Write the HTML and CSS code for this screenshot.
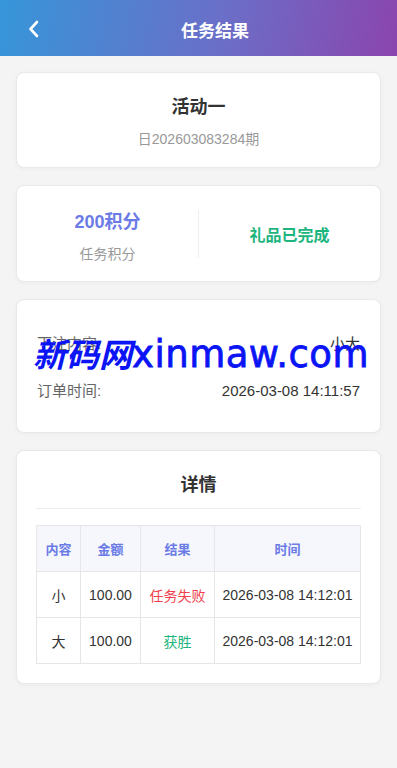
FILE: index.html
```html
<!DOCTYPE html>
<html lang="zh-CN">
<head>
  <meta charset="UTF-8" />
  <meta name="viewport" content="width=device-width, initial-scale=1" />
  <title>任务结果</title>
  <link rel="stylesheet" href="styles.css">
</head>
<body>

<!-- Header -->
<div class="header">
  <a href="#" class="back-btn">
    <svg width="14" height="18" viewBox="0 0 14 18"><path d="M10 2 L3.5 9 L10 16" fill="none" stroke="#fff" stroke-width="2.6" stroke-linecap="round" stroke-linejoin="round"/></svg>
  </a>
  <h1 class="header-title">任务结果</h1>
</div>

<div class="page">
  <!-- 活动信息 -->
  <div class="card card-activity">
    <h2 class="activity-name">活动一</h2>
    <p class="activity-period">日202603083284期</p>
  </div>

  <!-- 积分 -->
  <div class="card card-score">
    <div class="score-col">
      <div class="score-value">200积分</div>
      <div class="score-label">任务积分</div>
    </div>
    <div class="score-col">
      <div class="score-status">礼品已完成</div>
    </div>
  </div>

  <!-- 订单信息 -->
  <div class="card card-order">
    <div class="order-row"><span class="order-label">下注内容:</span><span class="order-value">小大</span></div>
    <div class="order-row"><span class="order-label">订单时间:</span><span class="order-value">2026-03-08 14:11:57</span></div>
    <div class="watermark"><span class="wm-cn">新码网</span><span class="wm-en">xinmaw.com</span></div>
  </div>

  <!-- 详情 -->
  <div class="card card-detail">
    <h2 class="detail-title">详情</h2>
    <table class="detail-table">
      <thead>
        <tr><th class="col-content">内容</th><th class="col-amount">金额</th><th class="col-result">结果</th><th>时间</th></tr>
      </thead>
      <tbody>
        <tr><td>小</td><td>100.00</td><td class="lose">任务失败</td><td>2026-03-08 14:12:01</td></tr>
        <tr><td>大</td><td>100.00</td><td class="win">获胜</td><td>2026-03-08 14:12:01</td></tr>
      </tbody>
    </table>
  </div>
</div>

</body>
</html>
```

FILE: styles.css
```css
* {
  margin: 0; padding: 0; box-sizing: border-box;
}
body {
  font-family: 'Liberation Sans', 'Noto Sans CJK SC', sans-serif;
  background: #f4f4f4;
  color: #333;
}
.header {
  height: 56px;
  background: linear-gradient(100deg, #3696d9 0%, #6a6fc8 55%, #8b45ae 100%);
  display: flex;
  align-items: center;
  padding-left: 27px;
}
.back-btn {
  display: flex;
  width: 14px;
  margin-top: 2px;
}
.header-title {
  flex: 1;
  text-align: center;
  color: #fff;
  font-size: 17px;
  font-weight: bold;
  padding-top: 3px;
  padding-right: 8px;
}
.page {
  padding: 16px 16px;
  display: flex;
  flex-direction: column;
  gap: 17px;
}
.card {
  background: #fff;
  border-radius: 8px;
  border: 1px solid #e9e9e9;
  box-shadow: 0 1px 4px rgba(0, 0, 0, 0.04);
}
.card-activity {
  height: 96px;
  text-align: center;
  padding-top: 22px;
}
.activity-name {
  font-size: 18px;
  font-weight: bold;
  color: #333;
  line-height: 24px;
}
.activity-period {
  margin-top: 10px;
  font-size: 14px;
  color: #999;
  line-height: 20px;
}
.card-score {
  height: 97px;
  display: flex;
  align-items: center;
}
.score-col {
  flex: 1;
  text-align: center;
}
.score-col + .score-col {
  border-left: 1px solid #eee;
  height: 48px;
  display: flex;
  align-items: center;
  justify-content: center;
}
.score-value {
  font-size: 18px;
  font-weight: bold;
  color: #6b7be6;
  line-height: 24px;
  margin-top: 6px;
}
.score-label {
  margin-top: 10px;
  font-size: 14px;
  color: #999;
  line-height: 20px;
}
.score-status {
  font-size: 16px;
  font-weight: bold;
  color: #1db57e;
}
.card-order {
  height: 134px;
  padding: 34px 20px 0;
  position: relative;
  overflow: hidden;
}
.order-row {
  display: flex;
  justify-content: space-between;
  font-size: 15px;
  line-height: 20px;
  margin-bottom: 27px;
}
.order-label {
  color: #666;
}
.order-value {
  color: #333;
}
.watermark {
  position: absolute;
  left: 16px;
  top: 33px;
  color: #0a14f5;
  white-space: nowrap;
  display: flex;
  align-items: baseline;
  line-height: 40px;
}
.wm-cn {
  font-family: 'Noto Sans CJK SC', sans-serif;
  font-size: 33px;
  font-weight: bold;
  font-style: italic;
}
.wm-en {
  font-family: 'DejaVu Sans', sans-serif;
  font-size: 37px;
  letter-spacing: 0.5px;
  -webkit-text-stroke: 0.8px #0a14f5;
}
.card-detail {
  height: 234px;
  padding: 21px 19px 0;
}
.detail-title {
  font-size: 18px;
  font-weight: bold;
  color: #333;
  text-align: center;
  line-height: 26px;
  padding-bottom: 10px;
  border-bottom: 1px solid #eee;
}
.detail-table {
  margin-top: 16px;
  width: 100%;
  border-collapse: collapse;
  font-size: 14px;
}
.detail-table th,
.detail-table td {
  border: 1px solid #e6e6e6;
  text-align: center;
  height: 46px;
  padding: 0;
}
.detail-table th {
  background: #f5f7fd;
  color: #6b7be6;
  font-size: 13px;
  font-weight: bold;
}
.col-content { width: 44px; }
.col-amount { width: 60px; }
.col-result { width: 74px; }
.detail-table td {
  color: #333;
}
.detail-table .lose {
  color: #f0414c;
}
.detail-table .win {
  color: #1db57e;
}
```
